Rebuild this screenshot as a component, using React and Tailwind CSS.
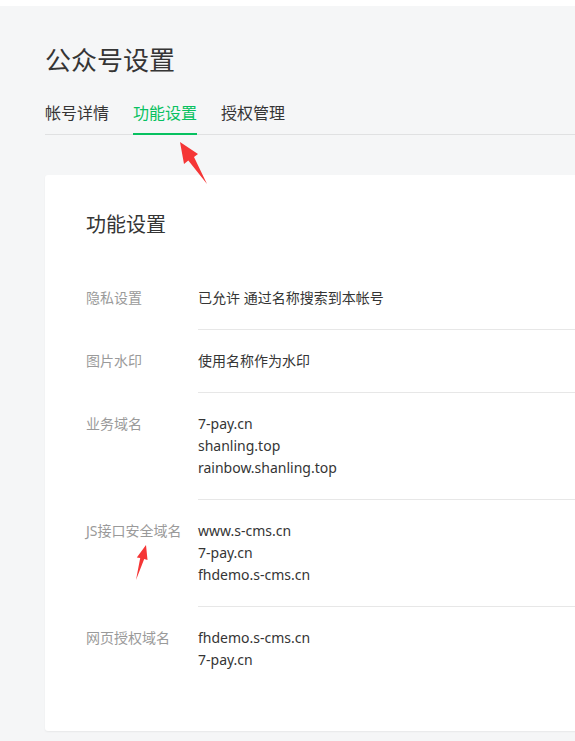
import React from "react";

const rows = [
  { label: "隐私设置", values: ["已允许 通过名称搜索到本帐号"] },
  { label: "图片水印", values: ["使用名称作为水印"] },
  { label: "业务域名", values: ["7-pay.cn", "shanling.top", "rainbow.shanling.top"] },
  { label: "JS接口安全域名", values: ["www.s-cms.cn", "7-pay.cn", "fhdemo.s-cms.cn"] },
  { label: "网页授权域名", values: ["fhdemo.s-cms.cn", "7-pay.cn"] },
];

export default function App() {
  return (
    <div
      className="relative w-[575px] h-[741px] overflow-hidden bg-white"
      style={{ fontFamily: '"Noto Sans", "Noto Sans CJK SC", sans-serif' }}
    >
      <div className="mt-[6px] h-[735px] bg-[#f5f6f7] pl-[45px] pt-[36px]">
        <h1 className="text-[26px] leading-[36px] text-[#353535] font-normal">公众号设置</h1>
        <div className="mt-[23px] flex gap-[24px] border-b border-[#e0e1e2] text-[16px] leading-[24px]">
          <div className="-mb-px pb-[8px] border-b-2 border-transparent text-[#353535]">帐号详情</div>
          <div className="-mb-px pb-[8px] border-b-2 border-[#07c160] text-[#07c160]">功能设置</div>
          <div className="-mb-px pb-[8px] border-b-2 border-transparent text-[#353535]">授权管理</div>
        </div>
        <div className="mt-[40px] w-[600px] rounded-[3px] bg-white shadow-[0_1px_2px_rgba(0,0,0,0.06)] pl-[41px] pt-[36px] pb-[40px]">
          <h2 className="text-[20px] leading-[28px] text-[#353535] font-normal">功能设置</h2>
          <div className="mt-[28px] text-[14px] leading-[22px]">
            {rows.map((r, i) => (
              <div key={i} className="flex">
                <div className="w-[112px] shrink-0 pt-5 text-[#9a9a9a]">{r.label}</div>
                <div
                  className={
                    i < rows.length - 1
                      ? "flex-1 py-5 border-b border-[#e7e7e7] text-[#353535]"
                      : "flex-1 py-5 text-[#353535]"
                  }
                >
                  {r.values.map((v, j) => (
                    <div key={j}>{v}</div>
                  ))}
                </div>
              </div>
            ))}
          </div>
        </div>
      </div>
      <svg className="absolute left-0 top-0 pointer-events-none" width="575" height="741">
        <polygon
          points="180,142 198,154 194,157 207,184 188.3,160.5 184,164"
          fill="#f53636"
        />
        <polygon
          points="146,545 147.5,560 144.2,559 136,580 140.2,558 136.8,557.5"
          fill="#f53636"
        />
      </svg>
    </div>
  );
}
